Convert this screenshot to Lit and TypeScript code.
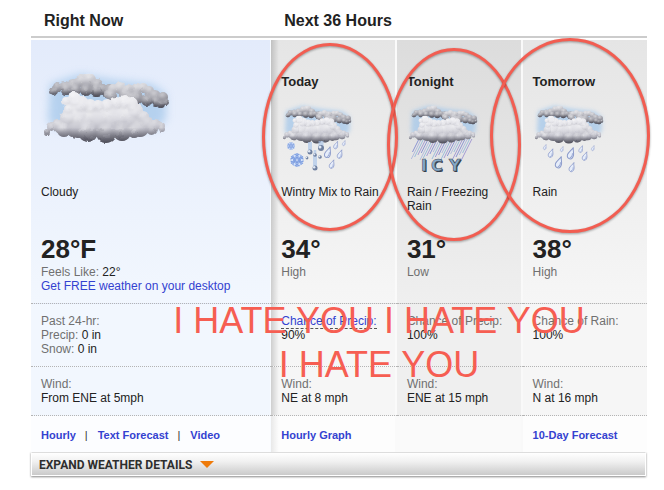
import { LitElement, html, svg, css, nothing } from "lit";
import { customElement, property } from "lit/decorators.js";

type Puff = [number, number, number];
type Kind = "cloudy" | "mix" | "icy" | "rain";

const backLeft: Puff[] = [
  [24, 31, 4], [28, 27, 5], [35, 26, 5], [43, 26, 7], [51, 21, 6], [59, 20, 7], [67, 25, 6],
  [73, 29, 5], [79, 28, 4], [78, 33, 5], [36, 30, 5], [46, 30, 5], [56, 30, 6], [66, 31, 6], [21, 32, 2],
];
const backRight: Puff[] = [
  [79, 34, 5], [83, 29, 5], [90, 28, 6], [98, 30, 6], [107, 29, 6], [113, 28, 5], [119, 31, 5],
  [125, 36, 6], [133, 37, 5], [136, 42, 3], [95, 35, 6], [106, 38, 7], [117, 40, 6], [126, 42, 5],
  [131, 44, 4], [82, 36, 5], [100, 37, 5],
];
const front: Puff[] = [
  [17, 72, 3], [22, 67, 5], [27, 63, 4], [31, 67, 7], [37, 58, 7], [38, 49, 5], [36, 41, 4],
  [44, 39, 7], [51, 44, 8], [60, 46, 7], [68, 46, 6], [77, 45, 6], [86, 43, 6], [94, 42, 7],
  [101, 44, 7], [106, 51, 7], [113, 57, 6], [118, 63, 6], [125, 64, 5], [131, 66, 4], [132, 69, 3],
];
const frontBody: Puff[] = [
  [45, 52, 12], [48, 64, 14], [62, 60, 15], [80, 60, 16], [97, 58, 14], [110, 68, 9], [122, 69, 6],
  [34, 70, 7], [58, 72, 10], [76, 73, 10], [92, 72, 9], [104, 71, 7],
];

const discs = (puffs: Puff[]) => puffs.map(([x, y, r]) => svg`<circle cx=${x} cy=${y} r=${r} />`);

const cloudLayer = (id: string, puffs: Puff[], body: Puff[], top: number, bottom: number, tone: string) => svg`
  <clipPath id=${id}>${discs([...puffs, ...body])}</clipPath>
  <g clip-path="url(#${id})">
    <rect x="0" y=${top} width="150" height=${bottom - top} fill="url(#${tone})" />
    <g fill="url(#puff)" filter="url(#soft)">${discs(body)}${discs(puffs)}</g>
    <rect x="0" y=${top} width="150" height=${bottom - top} fill="url(#under)" />
  </g>`;

const clouds = svg`
  <defs>
    <linearGradient id="dark" x1="0" y1="0" x2="0" y2="1">
      <stop offset="0" stop-color="#dcdce0" /><stop offset="0.4" stop-color="#a8a8b0" />
      <stop offset="1" stop-color="#585862" />
    </linearGradient>
    <linearGradient id="light" x1="0" y1="0" x2="0" y2="1">
      <stop offset="0" stop-color="#f3f3f6" /><stop offset="0.4" stop-color="#dcdce2" />
      <stop offset="0.75" stop-color="#b6b6c0" /><stop offset="1" stop-color="#84848e" />
    </linearGradient>
    <linearGradient id="under" x1="0" y1="0" x2="0" y2="1">
      <stop offset="0.7" stop-color="#484854" stop-opacity="0" />
      <stop offset="1" stop-color="#3a3a46" stop-opacity="0.75" />
    </linearGradient>
    <radialGradient id="puff" cx="0.4" cy="0.3" r="0.65">
      <stop offset="0" stop-color="#fff" stop-opacity="0.5" />
      <stop offset="0.65" stop-color="#e8e8ee" stop-opacity="0.15" />
      <stop offset="1" stop-color="#777784" stop-opacity="0.14" />
    </radialGradient>
    <filter id="soft" x="-5%" y="-5%" width="110%" height="110%"><feGaussianBlur stdDeviation="0.9" /></filter>
    <filter id="glow" x="-20%" y="-20%" width="140%" height="140%"><feGaussianBlur stdDeviation="4" /></filter>
    <filter id="ragged" x="-5%" y="-5%" width="110%" height="110%">
      <feTurbulence type="fractalNoise" baseFrequency="0.15" numOctaves="2" seed="4" />
      <feDisplacementMap in="SourceGraphic" scale="3" xChannelSelector="R" yChannelSelector="G" />
    </filter>
  </defs>
  <path d="M20 24 L50 14 L84 20 L122 24 L136 34 V60 L124 70 H30 L18 62 Z" fill="#a5c8ea" opacity="0.75" filter="url(#glow)" />
  <g filter="url(#ragged)">
    ${cloudLayer("bl", backLeft, [], 14, 38, "dark")}
    ${cloudLayer("br", backRight, [], 22, 49, "dark")}
    ${cloudLayer("fr", front, frontBody, 32, 83, "light")}
  </g>`;

const drop = (x: number, y: number, s: number) => svg`
  <path transform="translate(${x} ${y}) rotate(14) scale(${s})"
    d="M1 -6 C1 -3 3 -1 3 2 C3 4.500 1.500 6 0 6 C-1.800 6 -3 4.500 -3 2.500 C-3 0 0 -3 1 -6 Z"
    fill="#e6edfa" stroke="#8c9bca" stroke-width="1" />
  <path transform="translate(${x} ${y}) rotate(14) scale(${s})" d="M1.500 0 C2 2 2 4 0 5" fill="none" stroke="#98a8d4" />`;

const flake = (x: number, y: number, r: number) => svg`
  <g transform="translate(${x} ${y}) scale(${r / 8})" fill="none" stroke="#7f9fe0" stroke-width="1.200">
    <circle r="7" fill="#d5e3fa" stroke="#a9c2ee" stroke-dasharray="2 1.500" />
    ${[0, 60, 120, 180, 240, 300].map((a) => svg`<path transform="rotate(${a})" d="M0 0 V-8 M-2.500 -7 L0 -4.500 L2.500 -7 M-1.800 -4 L0 -2 L1.800 -4" />`)}
    <circle r="1.500" fill="#fff" />
  </g>`;

const pellet = (x: number, y: number, r: number, tail: number) => svg`
  <rect x=${x - r + 0.5} y=${y - tail} width=${2 * r - 1} height=${tail} fill="#a9c4ea" opacity="0.65" />
  <circle cx=${x} cy=${y} r=${r} fill="#6e7f9f" />
  <circle cx=${x - r / 3} cy=${y - r / 3} r=${r / 2} fill="#dfe8f5" />`;

const rain = svg`${drop(12, 47, 0.45)}${drop(18, 53, 0.75)}${drop(29, 49, 0.45)}${drop(26, 62, 1)}
  ${drop(38, 53, 1)}${drop(48, 49, 0.6)}${drop(52, 56, 0.75)}${drop(60, 48, 0.45)}${drop(39, 67, 0.8)}`;

const mix = svg`${flake(10, 46, 4)}${flake(16, 60, 7)}
  ${pellet(29, 52, 2.5, 10)}${pellet(40, 48, 3, 7)}${pellet(34, 68, 2.5, 13)}
  ${pellet(34, 55, 1.8, 5)}${pellet(39, 57, 1.8, 0)}${pellet(26, 58, 1.4, 0)}
  ${drop(47, 52, 0.95)}${drop(55, 45, 0.65)}${drop(63, 43, 0.45)}${drop(59, 54, 0.75)}${drop(51, 64, 0.75)}`;

const streakInk = ["#7b86cf", "#a9b4dc", "#8fb6d8", "#9a8fd0"];
const streaks = svg`${Array.from({ length: 24 }, (_, i) => {
  const x = 12 + i * 2.3;
  const len = 13 + ((i * 7) % 9);
  return svg`<path d="M${x} 39 l${-len / 2} ${len}" stroke=${streakInk[i % 4]} stroke-width="1" opacity="0.85" />`;
})}`;
const icyWord = svg`
  <g font-family="DejaVu Sans, sans-serif" font-weight="700" font-size="16">
    <g fill="#343a46"><text x="15" y="72">I</text><text x="25" y="72">C</text><text x="43" y="72">Y</text></g>
    <g fill="#84a9c9" stroke="#3f4c60" stroke-width="0.6"><text x="14" y="71">I</text><text x="24" y="71">C</text><text x="42" y="71">Y</text></g>
  </g>`;

@customElement("weather-icon")
export class WeatherIcon extends LitElement {
  @property() kind: Kind = "cloudy";

  static styles = css`
    :host { display: block; }
    svg { display: block; overflow: visible; }
  `;

  render() {
    if (this.kind === "cloudy") {
      return html`<svg width="139" height="90" viewBox="11 0 139 90" aria-hidden="true">${clouds}</svg>`;
    }
    return html`<svg width="75" height="75" viewBox="0 0 75 75" aria-hidden="true">
      ${this.kind === "icy" ? streaks : nothing}
      <g transform="translate(-6 -2) scale(0.55)">${clouds}</g>
      ${this.kind === "rain" ? rain : this.kind === "mix" ? mix : icyWord}
    </svg>`;
  }
}

interface Period {
  name: string;
  tone: string;
  icon: Kind;
  sky: string;
  temp: string;
  extreme: string;
  chanceLabel: string;
  chanceLink?: boolean;
  chance: string;
  wind: string;
  more?: string;
}

const periods: Period[] = [
  { name: "Today", tone: "today", icon: "mix", sky: "Wintry Mix to Rain", temp: "34°", extreme: "High",
    chanceLabel: "Chance of Precip:", chanceLink: true, chance: "90%", wind: "NE at 8 mph", more: "Hourly Graph" },
  { name: "Tonight", tone: "tonight", icon: "icy", sky: "Rain / Freezing Rain", temp: "31°", extreme: "Low",
    chanceLabel: "Chance of Precip:", chance: "100%", wind: "ENE at 15 mph" },
  { name: "Tomorrow", tone: "tomorrow", icon: "rain", sky: "Rain", temp: "38°", extreme: "High",
    chanceLabel: "Chance of Rain:", chance: "100%", wind: "N at 16 mph", more: "10-Day Forecast" },
];

@customElement("app-root")
export class AppRoot extends LitElement {
  static styles = css`
    :host {
      display: block;
      padding: 0 17px 14px 31px;
      background: #fff;
      color: #222;
      font: 12px/14px "Liberation Sans", Arial, sans-serif;
    }
    .panel { position: relative; }
    table { width: 100%; table-layout: fixed; border-spacing: 0; }
    .wide { width: 39%; }
    .day { width: 20.4%; }
    th { padding: 0 0 2px; text-align: left; }
    .title {
      margin: 0;
      padding: 12px 13px 6px;
      border-bottom: 2px solid #ccc;
      font-size: 16px;
      line-height: 18px;
    }
    td {
      position: relative;
      padding: 10px 0 10px 10px;
      vertical-align: top;
      border-bottom: 1px dotted #b4b4b4;
      background: var(--flat);
    }
    .now { --top: #e3ebfb; --flat: #f2f7fe; --foot: #fcfdff; box-shadow: inset -1px 0 #f8fbff; }
    .today { --top: #e5e5e5; --flat: #f6f6f6; --foot: #fdfdfd; box-shadow: inset -2px 0 #fafafa; }
    .tonight { --top: #dcdcdc; --flat: #efefef; --foot: #fafafa; box-shadow: inset -2px 0 #f9f9f9; }
    .tomorrow { --top: #e5e5e5; --flat: #f6f6f6; --foot: #fdfdfd; }
    .sky-row td { padding: 34px 0 10px 10px; background: linear-gradient(var(--top), var(--flat)); }
    .sky-row .now { padding-top: 20px; }
    .foot-row td { padding: 12px 0 10px 10px; border-bottom: 0; background: var(--foot); }
    .today::before {
      content: "";
      position: absolute;
      inset: 0 auto 0 0;
      width: 8px;
      background: linear-gradient(90deg, rgba(0, 0, 0, 0.16), transparent);
    }
    .foot-row .today::before { opacity: 0.5; }
    .name { margin: 0 0 10px; font-size: 13px; line-height: 16px; }
    .small-icon { margin-bottom: 10px; }
    .big-icon { margin-bottom: 35px; }
    p { margin: 0; }
    .sky { min-height: 50px; padding-right: 10px; }
    .temp { margin-bottom: 2px; font-size: 26px; line-height: 28px; font-weight: 700; }
    .label { color: #707070; }
    a { color: #3442d0; text-decoration: none; }
    .hint { border-bottom: 1px dashed #555; }
    .more { font-size: 11px; font-weight: 700; }
    .links { display: flex; }
    .links .more + .more::before { content: "|"; margin: 0 10px 0 9px; color: #333; font-weight: 400; }
    .expand {
      display: flex;
      align-items: center;
      gap: 8px;
      box-sizing: border-box;
      width: calc(100% - 1px);
      height: 24px;
      padding: 2px 7px 0;
      border: 1px solid #fff;
      border-top-color: #ddd;
      background: linear-gradient(#fff, #f0f0f0 40%, #cacaca);
      box-shadow: 0 1px 2px #888;
      color: #2e2e2e;
      font: 700 12px/14px Roboto, "Liberation Sans", sans-serif;
    }
    .ring {
      position: absolute;
      box-sizing: border-box;
      border: 3px solid #f25d51;
      border-radius: 50%;
      filter: drop-shadow(0 1px 1px rgba(0, 0, 0, 0.35));
      z-index: 1;
      pointer-events: none;
    }
    .today .ring { inset: 3px -1px auto -9px; height: 188px; }
    .tonight .ring { inset: 8px 2px auto -10px; height: 193px; }
    .tomorrow .ring { inset: -2px -3px auto -33px; height: 195px; }
    .scrawl {
      position: absolute;
      inset: 299px 0 auto 0;
      padding-left: 80px;
      z-index: 2;
      color: #f65e52;
      font-size: 36px;
      line-height: 44px;
      text-align: center;
      pointer-events: none;
    }
  `;

  render() {
    return html`
      <main class="panel">
        <table>
          <colgroup><col class="wide" /><col class="day" /><col class="day" /><col /></colgroup>
          <thead>
            <tr>
              <th scope="col"><h2 class="title">Right Now</h2></th>
              <th scope="colgroup" colspan="3"><h2 class="title">Next 36 Hours</h2></th>
            </tr>
          </thead>
          <tbody>
            <tr class="sky-row">
              <td class="now">
                <weather-icon class="big-icon" kind="cloudy"></weather-icon>
                <p class="sky">Cloudy</p>
                <p class="temp">28°F</p>
                <p><span class="label">Feels Like:</span> 22°</p>
                <p><a href="#desktop">Get FREE weather on your desktop</a></p>
              </td>
              ${periods.map((p) => html`<td class=${p.tone}>
                <h3 class="name">${p.name}</h3>
                <weather-icon class="small-icon" kind=${p.icon}></weather-icon>
                <p class="sky">${p.sky}</p>
                <p class="temp">${p.temp}</p>
                <p class="label">${p.extreme}</p>
                <span class="ring"></span>
              </td>`)}
            </tr>
            <tr>
              <td class="now">
                <p class="label">Past 24-hr:</p>
                <p><span class="label">Precip:</span> 0 in</p>
                <p><span class="label">Snow:</span> 0 in</p>
              </td>
              ${periods.map((p) => html`<td class=${p.tone}>
                <p class="label">${p.chanceLink ? html`<a class="hint" href="#precip">${p.chanceLabel}</a>` : p.chanceLabel}</p>
                <p>${p.chance}</p>
              </td>`)}
            </tr>
            <tr>
              <td class="now"><p class="label">Wind:</p><p>From ENE at 5mph</p></td>
              ${periods.map((p) => html`<td class=${p.tone}><p class="label">Wind:</p><p>${p.wind}</p></td>`)}
            </tr>
            <tr class="foot-row">
              <td class="now">
                <nav class="links">
                  <a class="more" href="#hourly">Hourly</a><a class="more" href="#text">Text Forecast</a><a class="more" href="#video">Video</a>
                </nav>
              </td>
              ${periods.map((p) => html`<td class=${p.tone}>${p.more ? html`<a class="more" href="#more">${p.more}</a>` : nothing}</td>`)}
            </tr>
          </tbody>
        </table>
        <button class="expand" type="button">
          EXPAND WEATHER DETAILS
          <svg width="14" height="8" viewBox="0 0 14 8" aria-hidden="true"><path d="M0 0 H14 L7 7 Z" fill="#ef7b0a" /></svg>
        </button>
        <div class="scrawl">I HATE YOU I HATE YOU<br />I HATE YOU</div>
      </main>
    `;
  }
}
